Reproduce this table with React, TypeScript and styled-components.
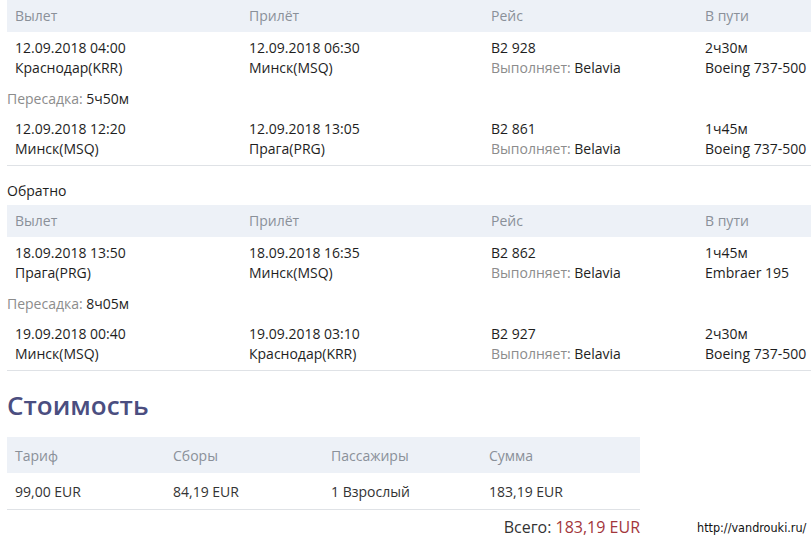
import styled, { createGlobalStyle } from 'styled-components';

type Segment = {
  depTime: string;
  depCity: string;
  arrTime: string;
  arrCity: string;
  flight: string;
  carrier: string;
  duration: string;
  aircraft: string;
};

type Leg = {
  title?: string;
  segments: Segment[];
  transfer: string;
};

const legs: Leg[] = [
  {
    transfer: '5ч50м',
    segments: [
      {
        depTime: '12.09.2018 04:00',
        depCity: 'Краснодар(KRR)',
        arrTime: '12.09.2018 06:30',
        arrCity: 'Минск(MSQ)',
        flight: 'B2 928',
        carrier: 'Belavia',
        duration: '2ч30м',
        aircraft: 'Boeing 737-500',
      },
      {
        depTime: '12.09.2018 12:20',
        depCity: 'Минск(MSQ)',
        arrTime: '12.09.2018 13:05',
        arrCity: 'Прага(PRG)',
        flight: 'B2 861',
        carrier: 'Belavia',
        duration: '1ч45м',
        aircraft: 'Boeing 737-500',
      },
    ],
  },
  {
    title: 'Обратно',
    transfer: '8ч05м',
    segments: [
      {
        depTime: '18.09.2018 13:50',
        depCity: 'Прага(PRG)',
        arrTime: '18.09.2018 16:35',
        arrCity: 'Минск(MSQ)',
        flight: 'B2 862',
        carrier: 'Belavia',
        duration: '1ч45м',
        aircraft: 'Embraer 195',
      },
      {
        depTime: '19.09.2018 00:40',
        depCity: 'Минск(MSQ)',
        arrTime: '19.09.2018 03:10',
        arrCity: 'Краснодар(KRR)',
        flight: 'B2 927',
        carrier: 'Belavia',
        duration: '2ч30м',
        aircraft: 'Boeing 737-500',
      },
    ],
  },
];

function SegmentRow({ s }: { s: Segment }) {
  return (
    <FlightGrid>
      <Cell>
        <div>{s.depTime}</div>
        <div>{s.depCity}</div>
      </Cell>
      <Cell>
        <div>{s.arrTime}</div>
        <div>{s.arrCity}</div>
      </Cell>
      <Cell>
        <div>{s.flight}</div>
        <div>
          <Muted>Выполняет:</Muted> {s.carrier}
        </div>
      </Cell>
      <Cell>
        <div>{s.duration}</div>
        <div>{s.aircraft}</div>
      </Cell>
    </FlightGrid>
  );
}

function LegTable({ leg }: { leg: Leg }) {
  return (
    <section>
      {leg.title && <LegTitle>{leg.title}</LegTitle>}
      <FlightGrid header>
        <HeadCell>Вылет</HeadCell>
        <HeadCell>Прилёт</HeadCell>
        <HeadCell>Рейс</HeadCell>
        <HeadCell>В пути</HeadCell>
      </FlightGrid>
      <SegmentRow s={leg.segments[0]} />
      <Transfer>
        <Muted>Пересадка:</Muted> {leg.transfer}
      </Transfer>
      <LastRow>
        <SegmentRow s={leg.segments[1]} />
      </LastRow>
    </section>
  );
}

export default function App() {
  return (
    <>
      <GlobalStyle />
      <Page>
        {legs.map((leg, i) => (
          <LegTable key={i} leg={leg} />
        ))}
        <PriceTitle>Стоимость</PriceTitle>
        <PriceTable>
          <PriceGrid header>
            <HeadCell>Тариф</HeadCell>
            <HeadCell>Сборы</HeadCell>
            <HeadCell>Пассажиры</HeadCell>
            <HeadCell>Сумма</HeadCell>
          </PriceGrid>
          <PriceGrid>
            <PriceCell>99,00 EUR</PriceCell>
            <PriceCell>84,19 EUR</PriceCell>
            <PriceCell>1 Взрослый</PriceCell>
            <PriceCell>183,19 EUR</PriceCell>
          </PriceGrid>
        </PriceTable>
        <Footer>
          <Total>
            Всего: <Amount>183,19 EUR</Amount>
          </Total>
          <Watermark>http://vandrouki.ru/</Watermark>
        </Footer>
      </Page>
    </>
  );
}

// style
const GlobalStyle = createGlobalStyle`
  body {
    margin: 0;
    background: #fff;
    font-family: "Open Sans", "Noto Sans", sans-serif;
    font-size: 14px;
    color: #1e1e1e;
  }
`;

const Page = styled.div`
  padding-left: 7px;
  width: 804px;
  overflow: hidden;
`;

const FlightGrid = styled.div<{ header?: boolean }>`
  display: grid;
  grid-template-columns: 234px 242px 214px 1fr;
  align-items: center;
  height: ${({ header }) => (header ? '32px' : 'auto')};
  padding: ${({ header }) => (header ? '0' : '6px 0')};
  background: ${({ header }) => (header ? '#edf1f7' : 'transparent')};
  line-height: 20px;
`;

const Cell = styled.div`
  padding-left: 8px;
  white-space: nowrap;
`;

const HeadCell = styled.div`
  padding-left: 8px;
  color: #8a9099;
  white-space: nowrap;
`;

const Muted = styled.span`
  color: #8c8c8c;
`;

const Transfer = styled.div`
  height: 29px;
  line-height: 29px;
`;

const LastRow = styled.div`
  border-bottom: 1px solid #dfe2e6;
`;

const LegTitle = styled.div`
  margin: 15px 0 4px;
  line-height: 20px;
`;

const PriceTitle = styled.h2`
  margin: 18px 0 16px;
  font-size: 26px;
  line-height: 32px;
  font-weight: 600;
  color: #4b4e80;
`;

const PriceTable = styled.div`
  width: 633px;
  border-bottom: 1px solid #dfe2e6;
`;

const PriceGrid = styled.div<{ header?: boolean }>`
  display: grid;
  grid-template-columns: 158px 158px 158px 1fr;
  align-items: center;
  height: 36px;
  background: ${({ header }) => (header ? '#edf1f7' : 'transparent')};
`;

const PriceCell = styled.div`
  padding-left: 8px;
  color: #333;
`;

const Footer = styled.div`
  display: flex;
  align-items: center;
  margin-top: 6px;
  height: 22px;
`;

const Total = styled.div`
  width: 633px;
  text-align: right;
  font-size: 16px;
  color: #333;
`;

const Amount = styled.span`
  color: #a3363b;
`;

const Watermark = styled.div`
  margin-left: 57px;
  font-family: "DejaVu Sans Condensed", "Liberation Sans", sans-serif;
  font-size: 12.5px;
  color: #111;
`;
